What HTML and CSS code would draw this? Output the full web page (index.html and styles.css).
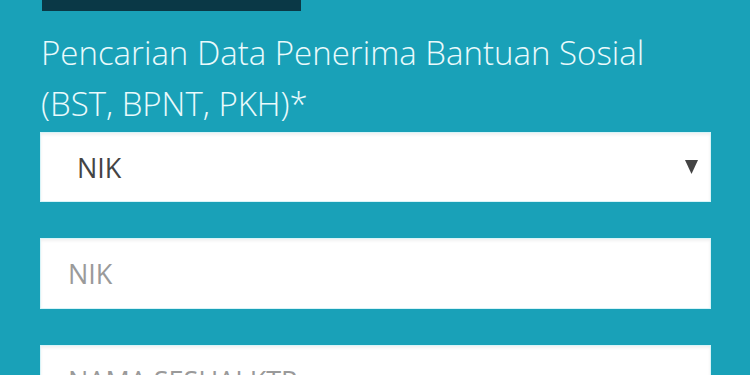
FILE: index.html
```html
<!DOCTYPE html>
<html lang="id">
<head>
  <meta charset="UTF-8" />
  <meta name="viewport" content="width=device-width, initial-scale=1" />
  <title>Cek Bansos</title>
  <link rel="stylesheet" href="styles.css">
</head>
<body>

<main class="panel">
  <div class="top-btn"></div>

  <form class="search-form">
    <label class="form-label" for="jenis">Pencarian Data Penerima Bantuan Sosial<br>(BST, BPNT, PKH)*</label>

    <div class="fields">
      <div class="select-wrap">
        <select id="jenis" class="field select">
          <option>NIK</option>
          <option>No. KK</option>
        </select>
        <svg class="arrow" width="13" height="14" viewBox="0 0 13 14"><path d="M0 0H13L6.5 14Z" fill="#444"/></svg>
      </div>

      <input type="text" class="field" placeholder="NIK" />
      <input type="text" class="field" placeholder="NAMA SESUAI KTP" />
    </div>
  </form>
</main>

</body>
</html>
```

FILE: styles.css
```css
* { box-sizing: border-box; }

body {
  margin: 0;
  font-family: 'Open Sans', 'Noto Sans', sans-serif;
  background: #19a1b8;
  color: #fff;
  height: 375px;
  overflow: hidden;
}

.panel {
  padding: 0 39px 0 40px;
}

.top-btn {
  width: 259px;
  height: 11px;
  margin-left: 2px;
  background: #0a3846;
}

.form-label {
  display: block;
  margin: 16px 0 3px 1px;
  font-size: 33px;
  font-weight: 300;
  line-height: 51px;
  color: #eafafc;
  white-space: nowrap;
}

.fields {
  display: flex;
  flex-direction: column;
  gap: 36px;
}

.select-wrap {
  position: relative;
}

.field {
  display: block;
  width: 100%;
  height: 71px;
  margin: 0;
  padding: 0 27px;
  border: 1px solid #d8f4f8;
  border-radius: 0;
  background: #fff;
  box-shadow: inset 0 2px 3px rgba(0, 0, 0, 0.06);
  font-family: inherit;
  font-size: 27px;
  color: #444;
  outline: none;
}

.field::placeholder {
  color: #9a9a9a;
}

.select {
  -webkit-appearance: none;
  appearance: none;
  padding-left: 36px;
  height: 70px;
}

.arrow {
  position: absolute;
  right: 13px;
  top: 28px;
  pointer-events: none;
}
```
